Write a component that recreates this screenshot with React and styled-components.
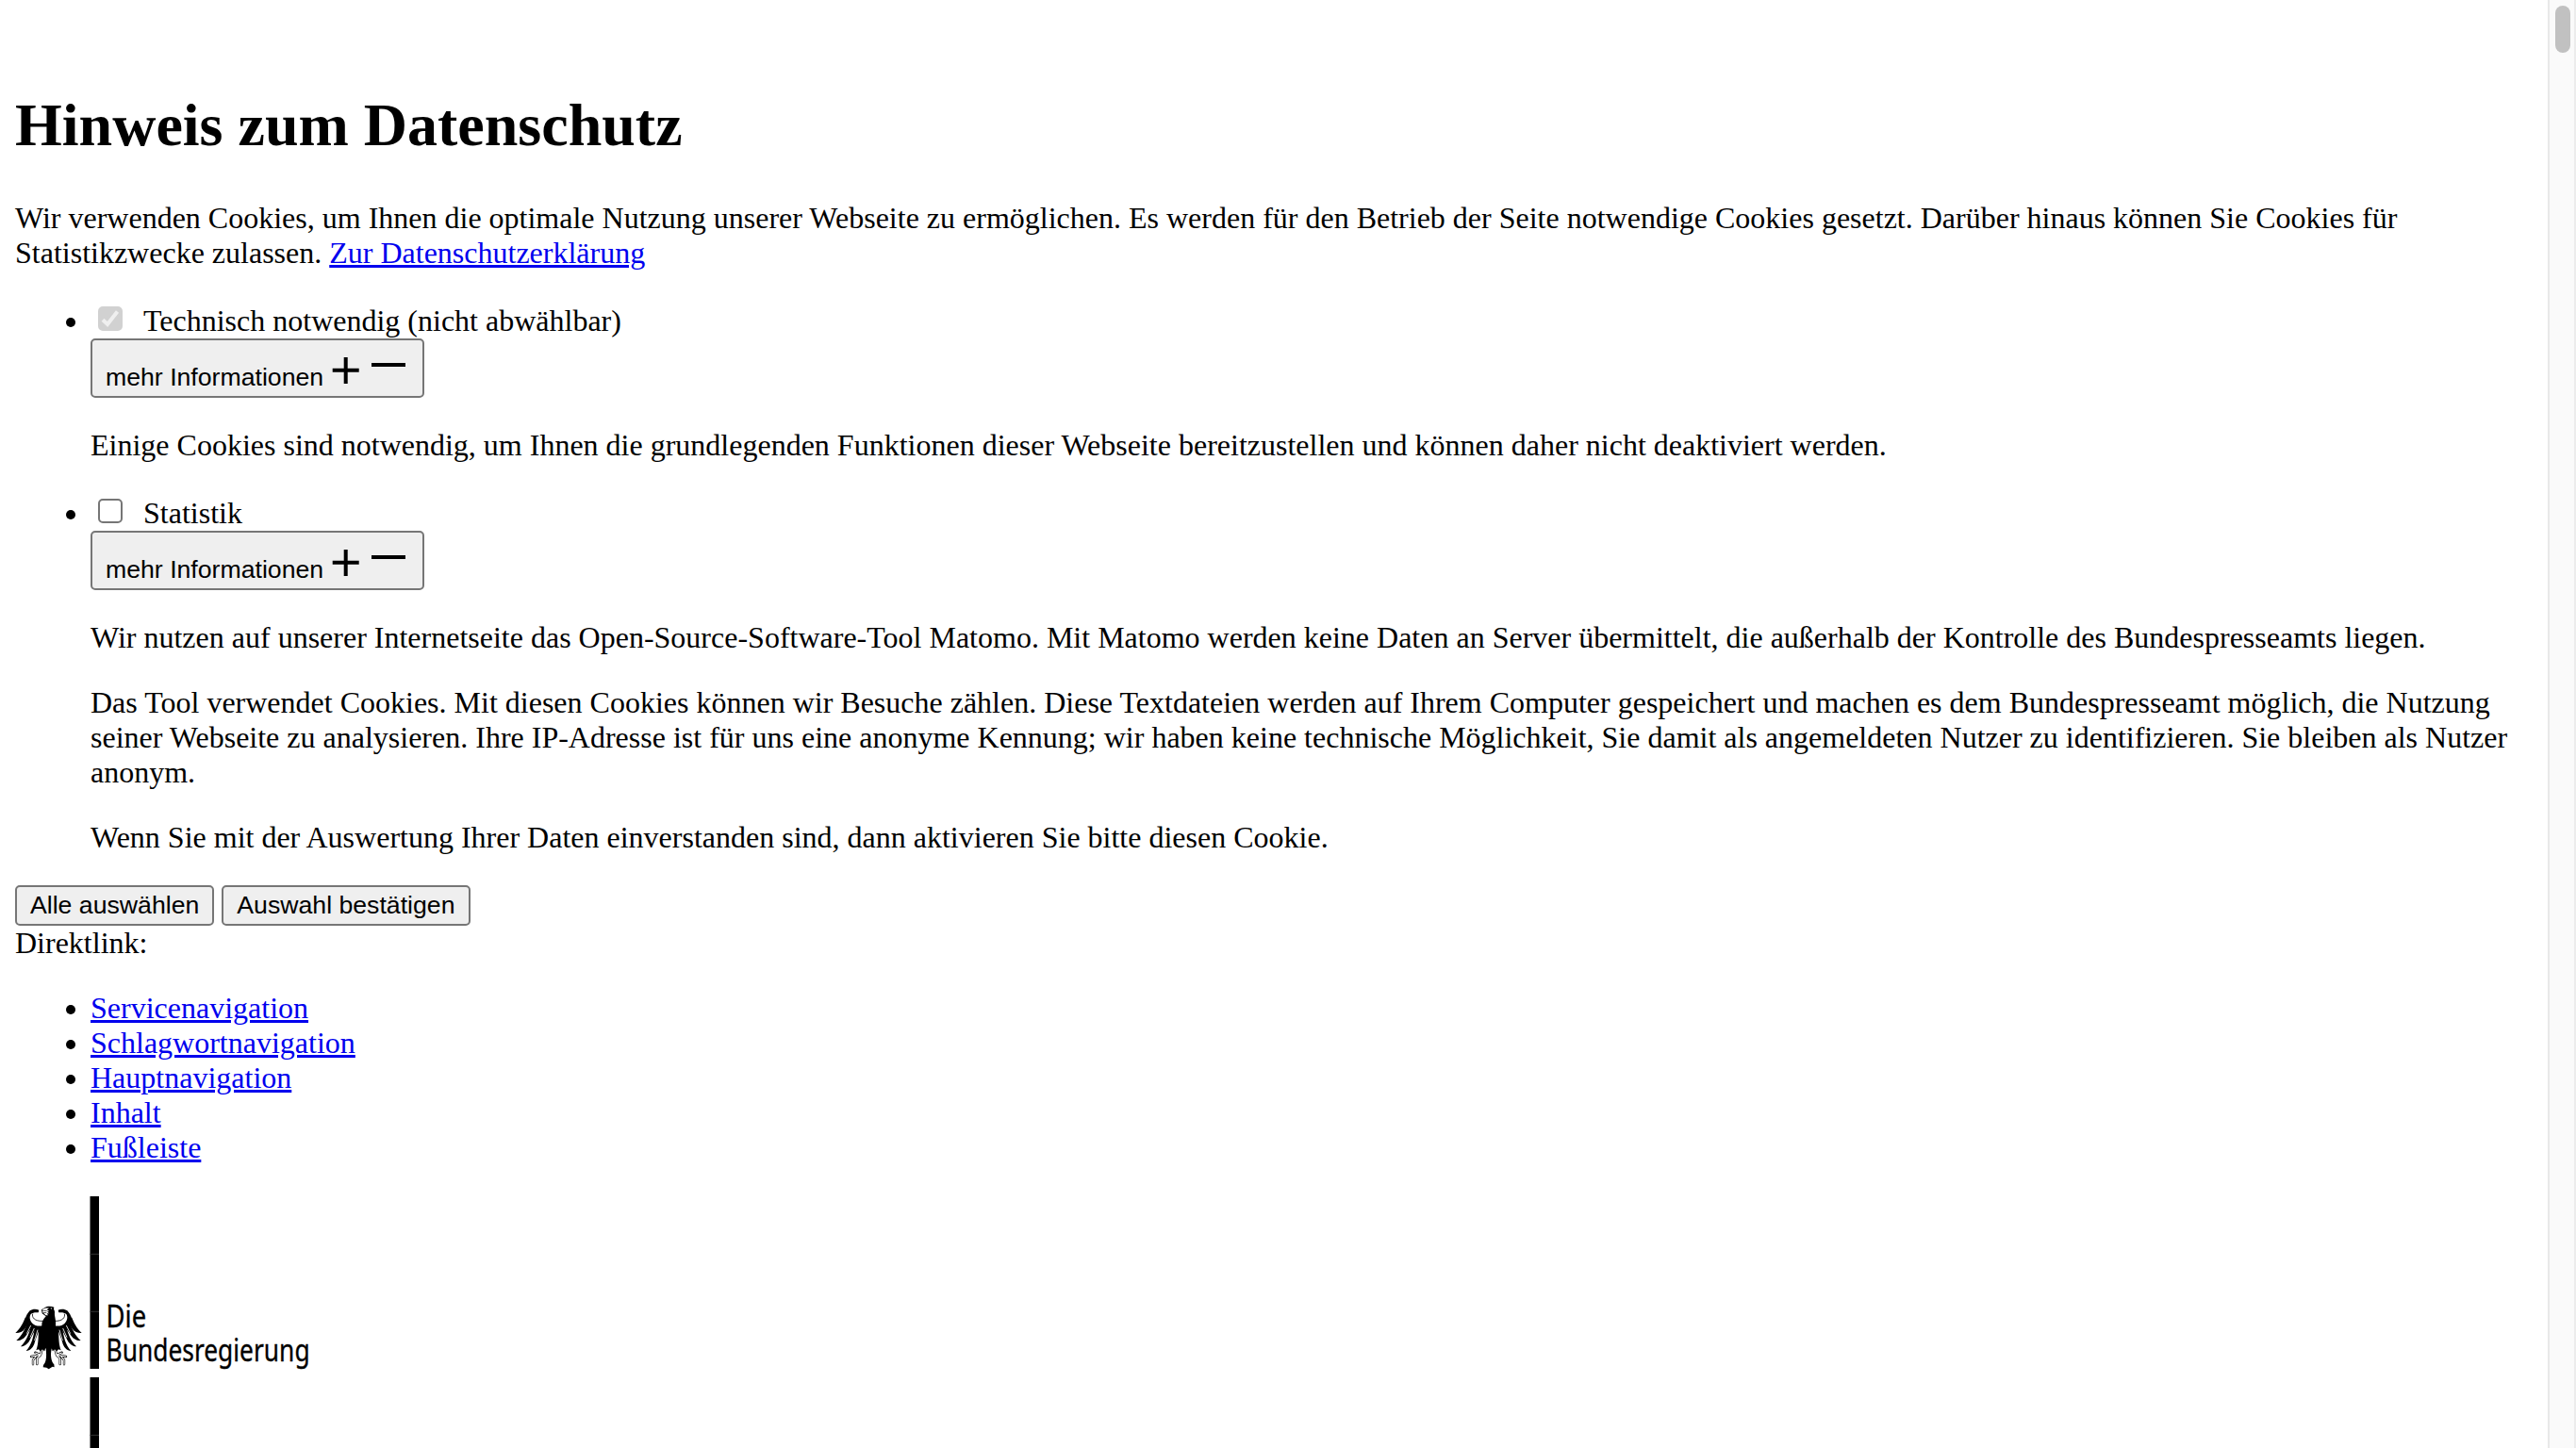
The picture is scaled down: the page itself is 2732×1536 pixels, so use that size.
import React from "react";
import styled, { createGlobalStyle } from "styled-components";

const GlobalStyle = createGlobalStyle`
  * { box-sizing: border-box; }
  html, body { margin: 0; background: #fff; overflow: hidden; }
  body {
    color: #000;
    font-family: "Liberation Serif", "Times New Roman", serif;
    font-size: 32px;
    line-height: 37px;
  }
`;

const Viewport = styled.div`
  display: flex;
  width: 2732px;
  height: 1536px;
  overflow: hidden;
`;

const Page = styled.main`
  flex: 1;
  min-width: 0;
  height: 1536px;
  overflow: hidden;
  padding: 96px 16px 0;
`;

const ScrollTrack = styled.aside`
  width: 30px;
  flex: none;
  background: #fafafa;
  border-left: 2px solid #e8e8e8;
  border-right: 2px solid #ececec;
  padding: 6px 4px 0 6px;
`;

const ScrollThumb = styled.div`
  width: 16px;
  height: 50px;
  border-radius: 8px;
  background: #c1c1c1;
`;

const Title = styled.h1`
  margin: 0 0 43px;
  font-size: 64px;
  line-height: 74px;
  font-weight: 700;
`;

const Paragraph = styled.p`
  margin: 0 0 32px;
`;

const Link = styled.a`
  color: #0000ee;
  text-decoration: underline;
  text-decoration-thickness: 3px;
`;

const List = styled.ul`
  margin: 0 0 32px;
  padding: 0 0 0 80px;
  list-style: none;
`;

const Item = styled.li`
  display: flex;
  flex-direction: column;
  align-items: flex-start;
`;

const ItemLine = styled.div`
  display: flex;
  height: ${(p) => (p.$tall ? "40px" : "37px")};
  padding-top: ${(p) => (p.$tall ? "3px" : "0")};
  margin-left: -26px;

  &::before {
    content: "";
    width: 10px;
    height: 10px;
    margin: 15px 16px 0 0;
    border-radius: 50%;
    background: #000;
  }
`;

const Box = styled.span`
  width: 26px;
  height: 26px;
  margin: 3px 22px 0 8px;
  border-radius: 5px;
  border: 2px solid ${(p) => (p.$disabled ? "#d1d1d1" : "#767676")};
  background: ${(p) => (p.$disabled ? "#d1d1d1" : "#fff")};

  svg { display: block; width: 22px; height: 22px; }
`;

const Button = styled.button`
  display: flex;
  margin: 0;
  padding: ${(p) => (p.$info ? "24px" : "4px")} 14px 4px;
  border: 2px solid #767676;
  border-radius: 5px;
  background: #efefef;
  color: #000;
  font: 26.667px/31px "Liberation Sans", Arial, sans-serif;
  white-space: nowrap;
`;

const InfoButton = styled(Button)`
  width: 354px;
  height: 63px;
  margin-bottom: 32px;

  svg { display: block; flex: none; width: 82px; height: 36px; margin: -11px 0 0 6px; }
`;

const ButtonRow = styled.div`
  display: flex;
  gap: 8px;
`;

const Text = styled.div`
  margin-bottom: ${(p) => p.$gap || 0}px;
`;

const Logo = styled.svg`
  display: block;
  width: 360px;
  height: ${(p) => p.$height}px;
  margin: ${(p) => p.$top}px 0 0 -16px;
`;

function MoreInfo() {
  return (
    <InfoButton $info>
      mehr Informationen
      <svg viewBox="349 374 82 36">
        <path d="M352.7 392.8H380.7M366.7 379V407" stroke="#000" strokeWidth="4" />
        <path d="M394 387H430" stroke="#000" strokeWidth="4" />
      </svg>
    </InfoButton>
  );
}

function Option({ label, disabled, children }) {
  return (
    <Item>
      <ItemLine $tall>
        <Box $disabled={disabled}>
          {disabled && (
            <svg viewBox="0 0 22 22">
              <path d="M3 12.2L8 17L18.5 3.5" fill="none" stroke="#efefef" strokeWidth="4" />
            </svg>
          )}
        </Box>
        {label}
      </ItemLine>
      <MoreInfo />
      {children}
    </Item>
  );
}

function Wing() {
  return (
    <>
      <path d="M124 59C114 54 102 56 95 61C88 68 83 78 80 88C86 96 92 104 98 110C108 116 120 124 134 132L137 108C125 112 111 109 103 101C94 92 93 80 98 72C103 67 113 66 122 67Z" />
      <path d="M104 71C101 82 109 95 136 94" fill="none" stroke="#000" strokeWidth="2.4" />
      <path d="M81 82C74 98 66 118 49 132C60 133 72 128 78 120L91 100Z" />
      <path d="M88 98C80 118 70 140 52 156C66 157 78 149 85 137L103 112Z" />
      <path d="M100 106C94 130 86 156 66 175C79 175 91 165 97 150L114 118Z" />
      <path d="M111 113C107 142 101 170 83 189C96 189 107 178 111 160L124 124Z" />
      <path d="M123 120C122 150 122 170 115 187L123 184L129 191L134 184L142 190L147 170L145 120Z" />
      <path d="M109 117L96 146M120 122L110 156M98 108L85 134" stroke="#fff" strokeWidth="2.5" />
      <path
        d="M133 188L129 202M129 202L99 207M129 202L112 194M129 202L118 213V231M114 207L105 218V232"
        fill="none" stroke="#000" strokeWidth="7" strokeLinecap="round"
      />
      <path
        d="M133 188L129 202M129 202L99 207M129 202L113 195M129 202L118 213V231M114 207L105 218V232"
        fill="none" stroke="#fff" strokeWidth="3.4" strokeLinecap="round"
      />
    </>
  );
}

function Eagle() {
  return (
    <g transform="translate(0 101) scale(.33333)">
      <Wing />
      <g transform="translate(309) scale(-1 1)">
        <Wing />
      </g>
      <path d="M147 49C155 47 165 47 172 50L171 56C176 63 173 68 174 76C176 88 178 96 177 108L174 150C173 166 170 172 164 183C160 200 162 222 172 232L173 241L167 239L161 243L155 247L148 242L137 241L138 234C147 226 149 205 146 183C140 172 136 160 135 146L133 108C132 96 138 88 146 79L134 70L132 58Z" />
      <path d="M135 58C140 53 148 52 156 53L149 58L157 63L150 64L156 70L149 70L153 76L146 76L136 67Z" fill="#fff" />
      <path d="M134 61L149 61M137 68L148 67" stroke="#000" strokeWidth="2" />
      <path d="M160 53L166 52L164 56Z" fill="#fff" />
    </g>
  );
}

const links = ["Servicenavigation", "Schlagwortnavigation", "Hauptnavigation", "Inhalt", "Fußleiste"];

export default function App() {
  return (
    <Viewport>
      <GlobalStyle />
      <Page>
        <Title>Hinweis zum Datenschutz</Title>
        <Paragraph>
          Wir verwenden Cookies, um Ihnen die optimale Nutzung unserer Webseite zu ermöglichen. Es werden für den
          Betrieb der Seite notwendige Cookies gesetzt. Darüber hinaus können Sie Cookies für Statistikzwecke
          zulassen. <Link>Zur Datenschutzerklärung</Link>
        </Paragraph>
        <List>
          <Option label="Technisch notwendig (nicht abwählbar)" disabled>
            <Paragraph>
              Einige Cookies sind notwendig, um Ihnen die grundlegenden Funktionen dieser Webseite bereitzustellen
              und können daher nicht deaktiviert werden.
            </Paragraph>
          </Option>
          <Option label="Statistik">
            <Paragraph>
              Wir nutzen auf unserer Internetseite das Open-Source-Software-Tool Matomo. Mit Matomo werden keine
              Daten an Server übermittelt, die außerhalb der Kontrolle des Bundespresseamts liegen.
            </Paragraph>
            <Paragraph>
              Das Tool verwendet Cookies. Mit diesen Cookies können wir Besuche zählen. Diese Textdateien werden auf
              Ihrem Computer gespeichert und machen es dem Bundespresseamt möglich, die Nutzung seiner Webseite zu
              analysieren. Ihre IP-Adresse ist für uns eine anonyme Kennung; wir haben keine technische Möglichkeit,
              Sie damit als angemeldeten Nutzer zu identifizieren. Sie bleiben als Nutzer anonym.
            </Paragraph>
            <Text>Wenn Sie mit der Auswertung Ihrer Daten einverstanden sind, dann aktivieren Sie bitte diesen Cookie.</Text>
          </Option>
        </List>
        <ButtonRow>
          <Button>Alle auswählen</Button>
          <Button>Auswahl bestätigen</Button>
        </ButtonRow>
        <Text $gap={32}>Direktlink:</Text>
        <List>
          {links.map((name) => (
            <Item key={name}>
              <ItemLine>
                <Link>{name}</Link>
              </ItemLine>
            </Item>
          ))}
        </List>
        <Logo $height={190} $top={0} viewBox="0 1268 360 190">
          <path d="M95.5 1269H105V1452H95.5Z" />
          <path d="M95.5 1330.3H105M95.5 1391.3H105" stroke="#333" strokeWidth="1" />
          <g transform="translate(0 1269)">
            <Eagle />
          </g>
          <g fontFamily="'Noto Sans', sans-serif" fontSize="33.5" stroke="#000" strokeWidth="0.35">
            <text x="112.6" y="1407.7" textLength="42.5" lengthAdjust="spacingAndGlyphs">Die</text>
            <text x="112.6" y="1443.5" textLength="216" lengthAdjust="spacingAndGlyphs">Bundesregierung</text>
          </g>
        </Logo>
        <Logo $height={184} $top={3} viewBox="0 1461 360 184">
          <path d="M95.5 1461H105V1645H95.5Z" />
          <path d="M95.5 1522.4H105" stroke="#333" strokeWidth="1" />
        </Logo>
      </Page>
      <ScrollTrack>
        <ScrollThumb />
      </ScrollTrack>
    </Viewport>
  );
}
